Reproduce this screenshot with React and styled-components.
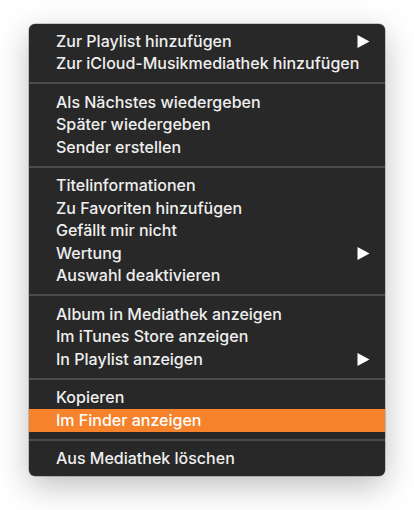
import React from 'react'
import styled, { createGlobalStyle } from 'styled-components'

const GlobalStyle = createGlobalStyle`
    html, body {
        margin: 0;
        padding: 0;
        background: #ffffff;
    }
    body {
        font-family: Inter, "Liberation Sans", Arial, sans-serif;
    }
`

const Stage = styled.div`
    width: 414px;
    height: 510px;
    padding: 24px 0 0 29px;
    box-sizing: border-box;
`

const Menu = styled.div`
    width: 356px;
    box-sizing: border-box;
    padding: 6px 0;
    background: #282828;
    border-radius: 6px;
    box-shadow: 0 0 0 0.5px rgba(0, 0, 0, 0.35), 0 10px 32px rgba(0, 0, 0, 0.26);
`

const Item = styled.div`
    height: 22.5px;
    display: flex;
    align-items: center;
    justify-content: space-between;
    padding: 0 15px 0 27px;
    font-size: 16px;
    font-weight: 450;
    color: ${p => (p.$active ? '#ffffff' : '#efefef')};
    background: ${p => (p.$active ? '#f6822b' : 'transparent')};
    white-space: nowrap;
`

const Label = styled.span`
    position: relative;
    top: -0.5px;
`

const Separator = styled.div`
    height: 16px;
    display: flex;
    align-items: center;
    &::before {
        content: '';
        flex: 1;
        height: 2px;
        background: #4a4a4a;
    }
`

const Arrow = () => (
    <svg width="13" height="13" viewBox="0 0 13 13">
        <path d="M0.5 0 L12.5 6.5 L0.5 13 Z" fill="#ffffff" />
    </svg>
)

const groups = [
    [
        { label: 'Zur Playlist hinzufügen', sub: true },
        { label: 'Zur iCloud-Musikmediathek hinzufügen' },
    ],
    [
        { label: 'Als Nächstes wiedergeben' },
        { label: 'Später wiedergeben' },
        { label: 'Sender erstellen' },
    ],
    [
        { label: 'Titelinformationen' },
        { label: 'Zu Favoriten hinzufügen' },
        { label: 'Gefällt mir nicht' },
        { label: 'Wertung', sub: true },
        { label: 'Auswahl deaktivieren' },
    ],
    [
        { label: 'Album in Mediathek anzeigen' },
        { label: 'Im iTunes Store anzeigen' },
        { label: 'In Playlist anzeigen', sub: true },
    ],
    [
        { label: 'Kopieren' },
        { label: 'Im Finder anzeigen', active: true },
    ],
    [
        { label: 'Aus Mediathek löschen' },
    ],
]

export default function App() {
    return (
        <>
            <GlobalStyle />
            <Stage>
                <Menu>
                    {groups.map((group, gi) => (
                        <React.Fragment key={gi}>
                            {gi > 0 && <Separator />}
                            {group.map(item => (
                                <Item key={item.label} $active={item.active}>
                                    <Label>{item.label}</Label>
                                    {item.sub && <Arrow />}
                                </Item>
                            ))}
                        </React.Fragment>
                    ))}
                </Menu>
            </Stage>
        </>
    )
}
